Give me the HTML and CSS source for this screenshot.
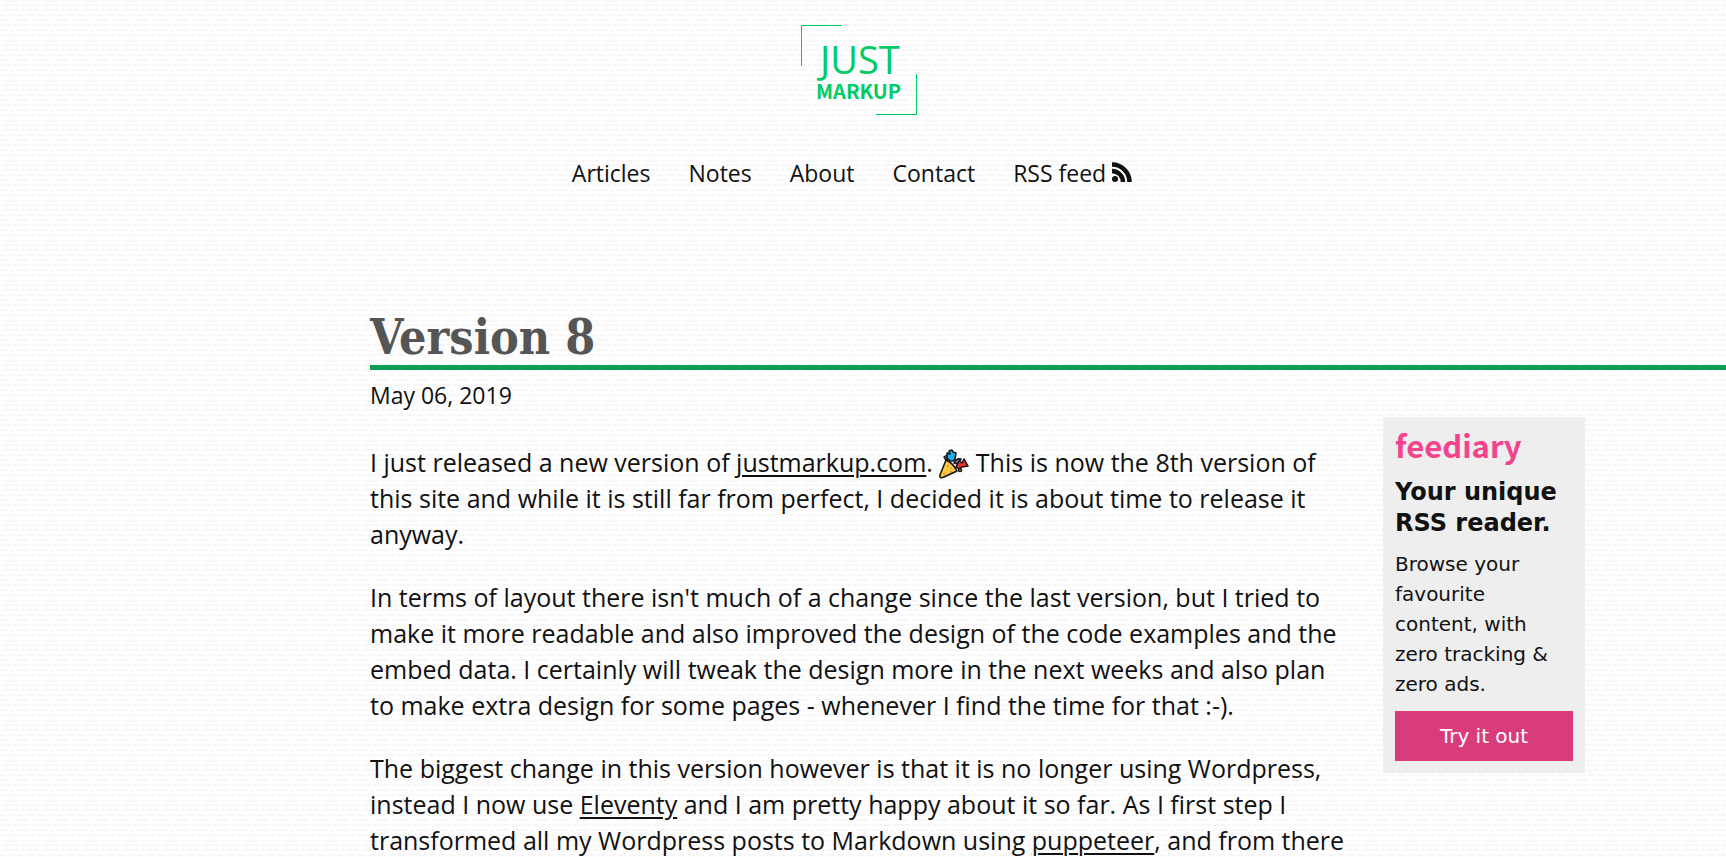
FILE: index.html
```html
<!DOCTYPE html>
<html lang="en">
<head>
    <meta charset="UTF-8">
    <meta name="viewport" content="width=device-width, initial-scale=1.0">
    <title>Version 8 - justmarkup</title>
    <link rel="stylesheet" href="styles.css">
</head>
<body>
    <header class="header">
        <a class="logo" href="/" aria-label="justmarkup">
            <svg width="116" height="90" viewBox="0 0 116 90" fill="none" stroke="#00cc66">
                <path d="M41 .5H.5V41M115.500 49V89.500H75" />
                <text class="logo-just" x="19" y="49">JUST</text>
                <text class="logo-markup" x="15" y="74">MARKUP</text>
            </svg>
        </a>
        <nav class="nav">
            <a href="/articles/">Articles</a>
            <a href="/notes/">Notes</a>
            <a href="/about/">About</a>
            <a href="/contact/">Contact</a>
            <a href="/feed.xml">RSS feed
                <svg class="rss" width="20" height="20" viewBox="0 0 20 20" fill="none" stroke="currentColor">
                    <circle cx="3" cy="17" r="3" fill="currentColor" stroke="none" />
                    <path d="M0 9A11 11 0 0 1 11 20M0 2.500A17.500 17.500 0 0 1 17.500 20" stroke-width="4.500" />
                </svg>
            </a>
        </nav>
    </header>

    <main class="main">
        <div class="title">
            <h1>Version 8</h1>
        </div>
        <time class="date" datetime="2019-05-06">May 06, 2019</time>
        <div class="columns">
            <article class="article">
                <p>I just released a new version of <a href="https://justmarkup.com">justmarkup.com</a>.
                    <svg class="party" width="30" height="30" viewBox="0 0 30 30" stroke="#111" stroke-width="1.500" stroke-linejoin="round" stroke-linecap="round" role="img" aria-label="Party popper">
                        <path fill="#8764b8" d="M5 8L8 6L10 10L7 11ZM15 14Q17 9 22 10L19 15Z" />
                        <path fill="#1fb1e8" d="M11 12L8 9L8 4L11 5L10 2L13 1L14 3L17 4L16 10L14 12Z" />
                        <path fill="#ffc83d" d="M7 11L1 26Q0 30 5 28L18 22Q15 15 7 11Z" />
                        <path fill="#e8342c" d="M17 18L20 12L23 14L25 10L29 17L23 18L20 20Z" />
                        <circle cx="21" cy="21" r="1.500" fill="#ffc83d" />
                        <path stroke="#e8342c" d="M9 17V17M12 23V23M5 25V25" />
                        <path stroke="#1fb1e8" d="M12 19V19" />
                    </svg>
                    This is now the 8th version of this site and while it is still far from perfect, I decided it is about time to release it anyway.</p>
                <p>In terms of layout there isn't much of a change since the last version, but I tried to make it more readable and also improved the design of the code examples and the embed data. I certainly will tweak the design more in the next weeks and also plan to make extra design for some pages - whenever I find the time for that :-).</p>
                <p>The biggest change in this version however is that it is no longer using Wordpress, instead I now use <a href="https://www.11ty.io">Eleventy</a> and I am pretty happy about it so far. As I first step I transformed all my Wordpress posts to Markdown using <a href="https://pptr.dev">puppeteer</a>, and from there</p>
            </article>
            <aside class="ad">
                <p class="ad-logo">feediary</p>
                <h2>Your unique RSS reader.</h2>
                <p class="ad-text">Browse your favourite content, with zero tracking &amp; zero ads.</p>
                <a class="ad-button" href="https://feediary.com">Try it out</a>
            </aside>
        </div>
    </main>
</body>
</html>
```
FILE: styles.css
```css
body {
    margin: 0;
    height: 100vh;
    overflow: hidden;
    font-family: "Open Sans", sans-serif;
    font-size: 25px;
    line-height: 36px;
    color: #111;
    background: #fefefe url("data:image/svg+xml,%3Csvg xmlns='http://www.w3.org/2000/svg' width='20' height='40'%3E%3Cpath fill='%23f7f7f7' d='M2 0h2v2h-2zM6 0h12v2h-12zM3 4h17v2h-17zM2 9h2v2h-2zM6 9h12v2h-12zM8 14h7v2h-7zM18 14h2v2h-2zM0 14h5v2h-5zM12 19h2v2h-2zM16 19h4v2h-4zM0 19h8v2h-8zM13 24h7v2h-7zM0 24h10v2h-10zM12 29h2v2h-2zM16 29h4v2h-4zM0 29h8v2h-8zM8 34h7v2h-7zM18 34h2v2h-2zM0 34h5v2h-5z'/%3E%3C/svg%3E");
}

a {
    color: inherit;
}

.header {
    display: flex;
    flex-direction: column;
    align-items: center;
    padding-top: 25px;
}

.logo {
    display: flex;
    margin-right: 8px;
}

.logo text {
    fill: #00cc66;
    stroke: none;
}

.logo-just {
    font-family: "Open Sans", sans-serif;
    font-size: 38px;
}

.logo-markup {
    font-family: "Noto Sans CJK JP", sans-serif;
    font-size: 20px;
    font-weight: 700;
}

.nav {
    display: flex;
    gap: 38px;
    margin-top: 40px;
    margin-right: 22px;
    font-size: 23px;
}

.nav a {
    text-decoration: none;
}

.main {
    padding-left: 370px;
    margin-top: 118px;
}

.title {
    border-bottom: 5px solid #0a9d55;
}

h1 {
    margin: 0;
    font-family: "DejaVu Serif Condensed", "DejaVu Serif", serif;
    font-size: 48px;
    line-height: 56px;
    color: #555;
}

.date {
    display: block;
    margin-top: 7px;
    font-size: 23px;
}

.columns {
    display: flex;
    align-items: flex-start;
    margin-top: 4px;
}

.article {
    flex: 0 1 980px;
    margin-top: 27px;
}

.article p {
    margin: 0 0 27px;
}

.article a {
    text-decoration-thickness: 2px;
    text-underline-offset: 3px;
}

.party {
    vertical-align: -7px;
}

.ad {
    box-sizing: border-box;
    width: 202px;
    margin-left: 33px;
    padding: 12px;
    background: #eee;
    font-family: "DejaVu Sans", sans-serif;
}

.ad-logo {
    margin: 0;
    font-family: "Noto Sans CJK JP", sans-serif;
    font-size: 31px;
    line-height: 32px;
    font-weight: 700;
    color: #f5428d;
}

.ad h2 {
    margin: 16px 0 10px;
    font-size: 24px;
    line-height: 31px;
}

.ad-text {
    margin: 0 0 12px;
    font-size: 20px;
    line-height: 30px;
}

.ad-button {
    display: block;
    font-size: 20px;
    line-height: 50px;
    text-align: center;
    text-decoration: none;
    color: #fff;
    background: #d83c7b;
}
```
